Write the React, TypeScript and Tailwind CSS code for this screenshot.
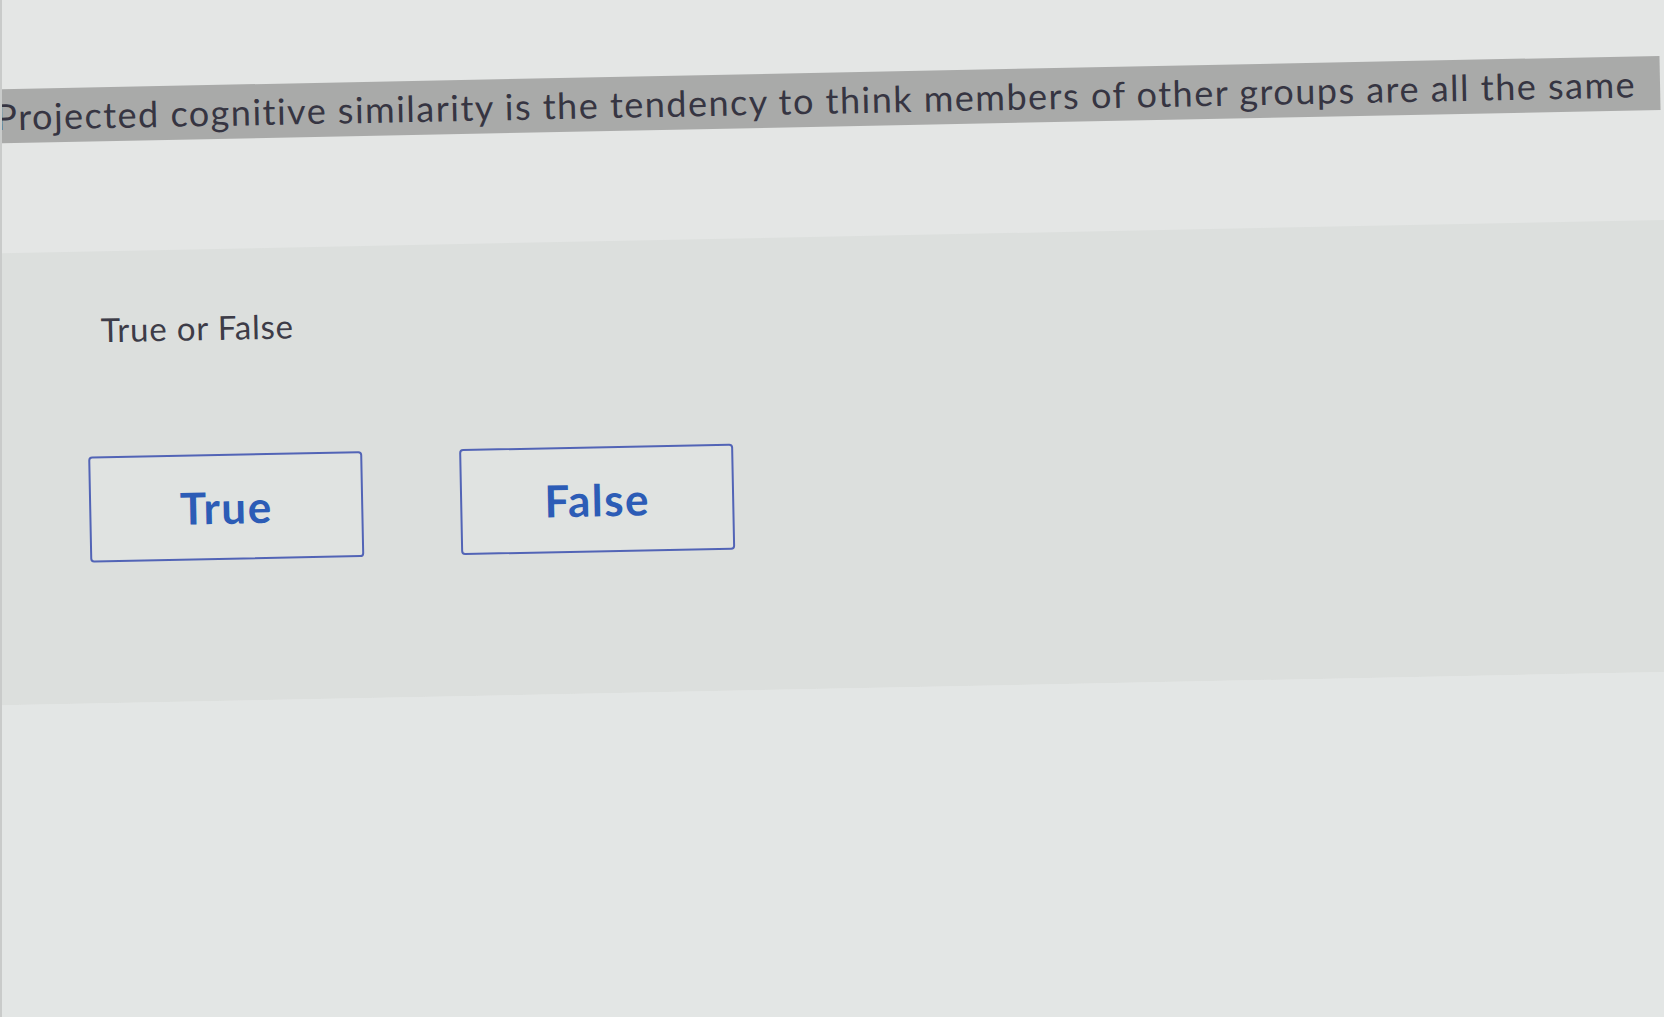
import React from 'react'

const answers = ['True', 'False']

const App = () => {
  return (
    <div className="h-screen w-full overflow-hidden bg-[#e4e6e5] font-['Lato',sans-serif] border-l-2 border-[#c9cbca]">
      <div className="-ml-[40px] w-[1780px] origin-top-left -rotate-[1.15deg]">
        <div className="pt-[90px]">
          <div className="h-[54px] w-[1696px] bg-[#a9aaa9] flex items-center overflow-hidden pl-[31px]">
            <p className="whitespace-nowrap text-[36px] text-[#363542] tracking-[1.5px]">
              Projected cognitive similarity is the tendency to think members of other groups are all the same
            </p>
          </div>
        </div>

        <div className="mt-[110px] h-[452px] bg-[#dcdfdd] pl-[132px] pt-[58px]">
          <h5 className="text-[33px] leading-[40px] text-[#3d3c48] tracking-[0.8px]">True or False</h5>
          <div className="mt-[107px] flex gap-[97px] -ml-[15px]">
            {answers.map((a) => (
              <button
                key={a}
                className="w-[274px] h-[106px] rounded-[4px] border-2 border-[#5264b6] bg-[#e0e3e1] flex items-center justify-center text-[44px] font-bold tracking-[1.5px] text-[#2c5cb6]"
              >
                {a}
              </button>
            ))}
          </div>
        </div>

        <div className="h-[400px] bg-[#e3e6e5]" />
      </div>
    </div>
  )
}

export default App
